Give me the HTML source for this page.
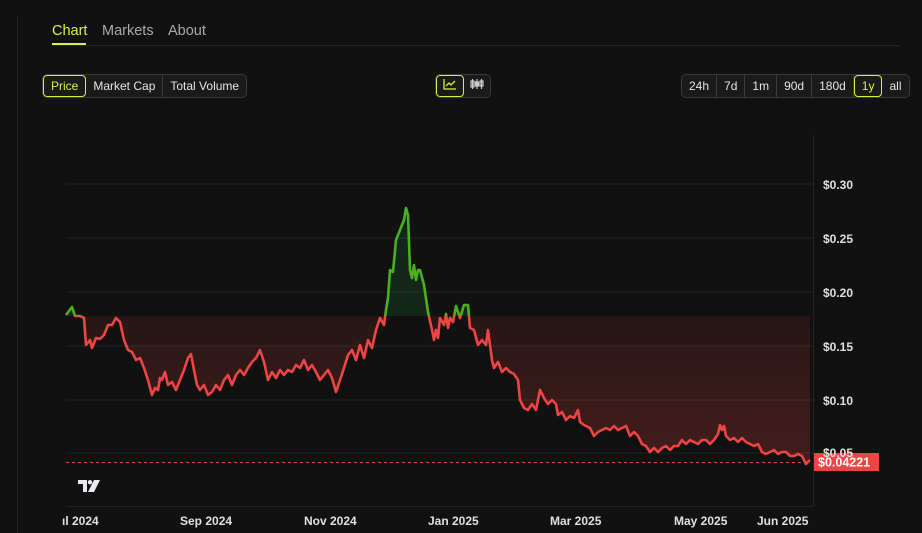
<!DOCTYPE html>
<html><head><meta charset="utf-8"><style>
*{box-sizing:border-box;margin:0;padding:0}
body{width:922px;height:533px;background:#111111;font-family:"Liberation Sans",sans-serif;color:#ddd;position:relative;overflow:hidden}
.vl{position:absolute;left:17px;top:16px;width:1px;height:517px;background:#222}
.tabs{position:absolute;left:52px;top:23px;font-size:14.5px}
.tabs span{position:absolute;white-space:nowrap}
.tline{position:absolute;left:52px;top:45px;width:848px;height:1px;background:#262626}
.grp{position:absolute;display:flex;border:1px solid #3a3a3a;border-radius:5px;overflow:hidden;height:24px;font-size:12px;background:#1a1a1a}
.grp div{padding:0 7px;line-height:22px;border-right:1px solid #3a3a3a;color:#e6e6e6}
.grp div:last-child{border-right:none}
.grp .on{border:1px solid #d4f542;color:#d4f542;border-radius:4px;line-height:20px}
.yl{position:absolute;left:823px;font-size:12px;color:#e0e0e0;font-weight:bold}
.xl{position:absolute;top:514px;font-size:12px;color:#e0e0e0;white-space:nowrap;font-weight:bold}
</style></head><body>
<div class="vl"></div>
<div class="tabs"><span style="left:0;color:#d4f542">Chart</span><span style="left:50px;color:#aaa">Markets</span><span style="left:116px;color:#aaa">About</span></div>
<div style="position:absolute;left:52px;top:43px;width:34px;height:2px;background:#d4f542"></div>
<div class="tline"></div>
<div class="grp" style="left:42px;top:74px"><div class="on">Price</div><div>Market Cap</div><div>Total Volume</div></div>
<div class="grp" style="left:435px;top:74px"><div class="on" style="padding:0 6px"><svg width="14" height="12" viewBox="0 0 14 12"><path d="M1 1V11H13M3 8L6 5L8 7L12 3" fill="none" stroke="#d4f542" stroke-width="1.3"/></svg></div><div style="padding:0 6px"><svg width="14" height="12" viewBox="0 0 14 12" fill="none" stroke="#ccc" stroke-width="1.2"><rect x="1" y="3" width="3" height="6"/><path d="M2.5 1V11M7 1V11M11.5 1V11"/><rect x="5.5" y="4" width="3" height="4" fill="#ccc"/><rect x="10" y="3" width="3" height="5"/></svg></div></div>
<div class="grp" style="left:681px;top:74px"><div>24h</div><div>7d</div><div>1m</div><div>90d</div><div>180d</div><div class="on">1y</div><div>all</div></div>

<svg style="position:absolute;left:0;top:0" width="922" height="533">
<defs>
<linearGradient id="rg" x1="0" y1="316" x2="0" y2="470" gradientUnits="userSpaceOnUse"><stop offset="0" stop-color="#ef4444" stop-opacity="0.1"/><stop offset="1" stop-color="#ef4444" stop-opacity="0.24"/></linearGradient>
<clipPath id="above"><rect x="0" y="0" width="922" height="316"/></clipPath>
<clipPath id="below"><rect x="0" y="316" width="922" height="220"/></clipPath>
</defs>
<g stroke="#242424" stroke-width="1">
<path d="M66 184H813M66 238H813M66 292H813M66 346H813M66 400H813M66 453H813M66 506.5H813M813.5 135V506"/>
</g>
<g id="ln"></g>
<path d="M66 462.5H810" stroke="#ef4444" stroke-dasharray="3 3" stroke-width="1"/>
<rect x="814" y="453" width="65" height="18" fill="#ef4444"/>
<text x="818" y="466.5" font-size="12.5" font-weight="bold" fill="#fff" font-family="Liberation Sans">$0.04221</text>
<g transform="translate(78,478)"><path d="M0 2H9V14H5V6H0Z M12 2A2.2 2.2 0 1 1 12 6.4A2.2 2.2 0 1 1 12 2Z M16 2H22L16 14H10Z" fill="#e8e8f0"/></g>
</svg>
<div class="yl" style="top:178px">$0.30</div>
<div class="yl" style="top:232px">$0.25</div>
<div class="yl" style="top:286px">$0.20</div>
<div class="yl" style="top:340px">$0.15</div>
<div class="yl" style="top:394px">$0.10</div>
<div class="yl" style="top:446px">$0.05</div>
<div class="xl" style="left:62px">ıl 2024</div>
<div class="xl" style="left:180px">Sep 2024</div>
<div class="xl" style="left:304px">Nov 2024</div>
<div class="xl" style="left:428px">Jan 2025</div>
<div class="xl" style="left:550px">Mar 2025</div>
<div class="xl" style="left:674px">May 2025</div>
<div class="xl" style="left:757px">Jun 2025</div>
<script>
var P="66,315 72,307 75,316 80,316 84,318 86,345 90,340 92,348 96,338 100,339 104,335 108,325 112,325 116,318 120,322 124,340 128,350 132,352 136,360 140,358 144,368 148,380 152,395 155,388 158,390 160,378 162,380 165,372 168,385 172,382 176,390 180,380 184,370 188,358 191,354 194,370 197,385 200,390 204,385 208,395 212,392 216,385 220,390 224,380 228,375 232,385 236,375 240,370 244,375 248,368 252,362 256,358 260,350 264,362 268,380 272,372 276,378 280,370 284,375 288,370 292,372 296,365 300,368 304,360 308,370 312,365 316,372 320,380 324,375 328,370 332,378 336,392 340,380 344,368 348,355 352,350 356,360 360,345 364,358 368,340 372,348 376,330 380,318 384,325 386,310 388,298 390,270 393,272 396,240 400,230 404,220 406,208 408,215 410,270 412,278 414,265 416,280 418,270 420,270 424,285 428,312 432,330 434,340 436,330 438,338 440,318 444,325 446,314 448,328 450,318 453,322 456,306 460,318 464,305 468,305 470,328 474,330 478,345 482,340 486,345 488,330 490,345 492,360 494,368 498,362 502,372 506,368 510,372 514,374 518,380 520,400 524,408 528,410 532,404 536,410 540,390 544,398 548,404 552,400 556,404 558,415 562,412 566,420 570,416 574,418 578,410 580,422 584,425 590,428 594,436 598,432 602,430 606,428 610,430 614,426 618,430 622,428 626,426 630,436 634,432 638,436 642,444 646,446 650,452 654,448 658,452 662,448 666,446 670,450 674,446 678,446 682,440 686,444 690,440 694,442 698,444 702,440 706,440 710,444 714,440 718,434 720,425 722,430 724,426 726,436 730,440 734,438 738,442 742,438 746,442 750,444 754,446 758,444 762,452 766,454 770,452 774,450 778,454 782,452 786,452 790,456 794,456 798,454 802,456 806,464 810,460";
var g=document.getElementById('ln');
g.innerHTML='<polygon clip-path="url(#above)" fill="#22c55e" fill-opacity="0.12" points="66,316 '+P+' 810,316"/>'+
'<polygon clip-path="url(#below)" fill="url(#rg)" points="66,316 '+P+' 810,316"/>'+
'<polyline clip-path="url(#above)" fill="none" stroke="#4caf1f" stroke-width="2.6" stroke-linejoin="round" points="'+P+'"/>'+
'<polyline clip-path="url(#below)" fill="none" stroke="#ef4444" stroke-width="2.6" stroke-linejoin="round" points="'+P+'"/>';
</script>
</body></html>
